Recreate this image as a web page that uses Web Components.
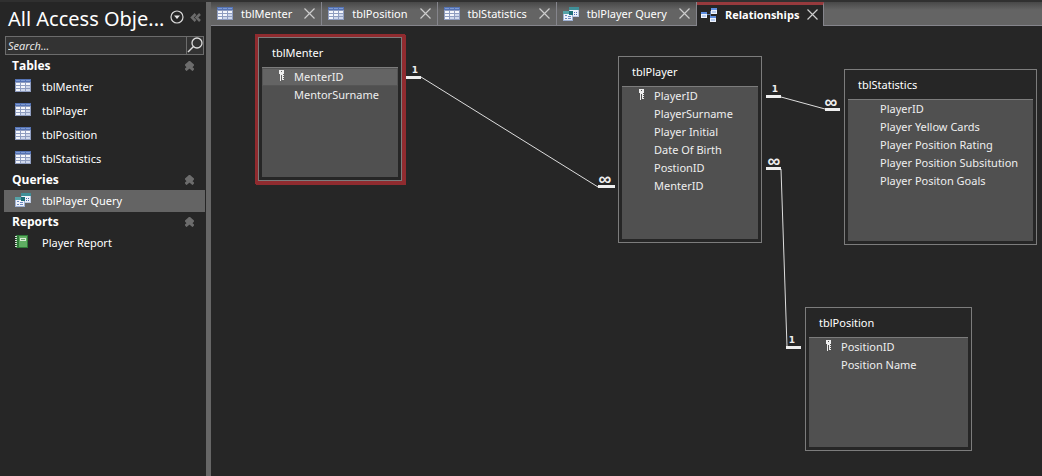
<!DOCTYPE html>
<html lang="en">
<head>
<meta charset="utf-8">
<title>Relationships</title>
<style>
html, body { height: 100%; }
body { margin: 0; background: #262626; color: #fff; font: 11px/18px "Noto Sans", "Open Sans", sans-serif; overflow: hidden; }
</style>
</head>
<body>
<access-window>
  <nav-pane slot="nav" heading="All Access Obje...">
    <nav-group label="Tables">
      <nav-item icon="table">tblMenter</nav-item>
      <nav-item icon="table">tblPlayer</nav-item>
      <nav-item icon="table">tblPosition</nav-item>
      <nav-item icon="table">tblStatistics</nav-item>
    </nav-group>
    <nav-group label="Queries">
      <nav-item icon="query" selected>tblPlayer Query</nav-item>
    </nav-group>
    <nav-group label="Reports">
      <nav-item icon="report">Player Report</nav-item>
    </nav-group>
  </nav-pane>
  <tab-bar slot="tabs">
    <doc-tab icon="table">tblMenter</doc-tab>
    <doc-tab icon="table">tblPosition</doc-tab>
    <doc-tab icon="table">tblStatistics</doc-tab>
    <doc-tab icon="query">tblPlayer Query</doc-tab>
    <doc-tab icon="relations" active>Relationships</doc-tab>
  </tab-bar>
  <relation-canvas>
    <table-node name="tblMenter" fields="*MenterID|MentorSurname" selected style="left:47px;top:11px;width:144px;height:144px"></table-node>
    <table-node name="tblPlayer" fields="*PlayerID|PlayerSurname|Player Initial|Date Of Birth|PostionID|MenterID" style="left:407px;top:30px;width:144px;height:187px"></table-node>
    <table-node name="tblStatistics" fields="PlayerID|Player Yellow Cards|Player Position Rating|Player Position Subsitution|Player Positon Goals" style="left:633px;top:43px;width:193px;height:176px"></table-node>
    <table-node name="tblPosition" fields="*PositionID|Position Name" style="left:594px;top:281px;width:167px;height:144px"></table-node>
  </relation-canvas>
</access-window>
<script>
const grid = `<rect width="16" height="13" fill="#8f9dc0"/><rect width="16" height="3" fill="#5573b4"/><path d="M1 1h4M6 1h4M11 1h4" stroke="#7f9bd2"/><path d="M1 4h4v2H1zM6 4h4v2H6zM11 4h4v2h-4zM1 7h4v2H1zM6 7h4v2H6zM11 7h4v2h-4zM1 10h4v2H1zM6 10h4v2H6zM11 10h4v2h-4z" fill="#f4f6fb"/><path d="M11 7h4v2h-4zM6 10h4v2H6zM11 10h4v2h-4z" fill="#cfd8ec"/>`;
const ICONS = {
  table: `<g transform="translate(0 1)">${grid}</g>`,
  query: `<rect x="6" y="1" width="10" height="10" fill="#b9c8e0"/><rect x="6" y="1" width="10" height="3" fill="#3f8f98"/><path d="M7 4h8v6H7z" fill="#eef2fa"/><path d="M11 6h1v1h-1zM13 6h1v1h-1zM11 8h1v1h-1zM13 8h1v1h-1z" fill="#4d6cb0"/><rect x="0" y="5" width="10" height="10" fill="#9fb2d6"/><path d="M0 5h10v3H0z" fill="#56a3a8"/><path d="M6 5h4v4H6z" fill="#1d6f78"/><path d="M1 8h5v1h3v5H1z" fill="#eef2fa"/><path d="M2 9h2v1H2zM5 10h3v1H5zM2 12h2v1H2zM5 12h3v1H5z" fill="#6d88c0"/>`,
  report: `<rect x="1" y="1" width="12" height="13" fill="#2f7a38"/><rect x="4" y="2" width="8" height="11" fill="#5fae62"/><path d="M5 4h6v3H5z" fill="#d9ecd6"/><path d="M6 5h4v1H6z" fill="#6fa570"/><path d="M0 2h3M0 4h3M0 6h3M0 8h3M0 10h3M0 12h3" stroke="#d9e4d9" stroke-dasharray="2 1"/>`,
  relations: `<path d="M5 7.500h4M9 4v8M9 4h2M9 12h1" fill="none" stroke="#5a78a8"/><rect x="0" y="5" width="6" height="6" fill="#eef3fc"/><rect x="0" y="5" width="6" height="2" fill="#5c8de0"/><rect x="10" y="1" width="6" height="6" fill="#eef3fc"/><rect x="10" y="1" width="6" height="2" fill="#5c8de0"/><rect x="9" y="9" width="6" height="6" fill="#eef3fc"/><rect x="9" y="9" width="6" height="2" fill="#5c8de0"/><path d="M11 4h4v2h-4zM10 12h4v2h-4zM1 8h4v2H1z" fill="#b9cdf0"/>`
};
const icon = n => `<svg class="icon" width="16" height="16" viewBox="0 0 16 16" shape-rendering="crispEdges" aria-hidden="true">${ICONS[n]}</svg>`;
const RESET = `button{font:inherit;color:inherit;background:none;border:0;padding:0;margin:0;text-align:left;display:block}svg{display:block;flex:none}`;

function define(name, render) {
  customElements.define(name, class extends HTMLElement {
    connectedCallback() {
      if (!this.shadowRoot) this.attachShadow({ mode: "open" }).innerHTML = render(this);
    }
  });
}

define("access-window", () => `<style>
  :host{display:grid;grid-template-columns:206px 5px minmax(0,1fr);min-height:100vh;background:#262626;box-sizing:border-box;border-top:2px solid #303030}
  .split{background:#666}
  main{display:flex;flex-direction:column;min-width:0}
  </style><slot name="nav"></slot><div class="split"></div><main><slot name="tabs"></slot><slot></slot></main>`);

define("nav-pane", el => `<style>${RESET}
  :host{display:block;padding:0 1px 0 4px}
  header{display:flex;align-items:center;height:34px}
  h1{margin:0;padding-left:4px;flex:1;font:20px/34px "Noto Sans","Open Sans",sans-serif;white-space:nowrap}
  .menu{margin-right:6px}
  .menu,.fold{align-self:flex-start;margin-top:8px}
  .fold{margin-right:4px}
  form{display:flex;height:17px;margin:0 1px 1px;border:1px solid #6c6c6c;background:#333}
  input{flex:1;min-width:0;border:0;outline:0;padding:0 2px;background:none;color:#fff;font:italic 11px/17px "Open Sans","Noto Sans",sans-serif}
  input::placeholder{color:#eee;opacity:1}
  form button{border-left:1px solid #6c6c6c;width:17px}
  </style>
  <header><h1>${el.getAttribute("heading")}</h1>
  <button class="menu" aria-label="Choose category"><svg width="14" height="14" viewBox="0 0 14 14"><circle cx="7" cy="7" r="6" fill="none" stroke="#d8d8d8" stroke-width="1.200"/><path d="M4 5.500h6L7 9z" fill="#e8e8e8"/></svg></button>
  <button class="fold" aria-label="Collapse pane"><svg width="11" height="14" viewBox="0 0 11 14"><path d="M5.500 4L2 7.500L5.500 11M10 4L6.500 7.500L10 11" fill="none" stroke="#6c6c6c" stroke-width="2.500"/></svg></button></header>
  <form><input type="text" aria-label="Search" placeholder="Search..."><button type="button" aria-label="Search"><svg width="16" height="17" viewBox="0 0 16 17"><circle cx="10" cy="6" r="5" fill="none" stroke="#ddd" stroke-width="1.300"/><path d="M6.500 9.500L1 15" stroke="#ddd" stroke-width="1.500"/></svg></button></form>
  <slot></slot>`);

define("nav-group", el => `<style>${RESET}
  :host{display:block}
  h2{margin:0;display:flex;align-items:center;justify-content:space-between;height:20px;padding:0 11px 0 8px;font:bold 12px/20px "Open Sans","Noto Sans",sans-serif}
  .items{display:grid;row-gap:2px}
  </style><h2>${el.getAttribute("label")}<button aria-label="Collapse ${el.getAttribute("label")}"><svg width="9" height="10" viewBox="0 0 9 10"><path d="M.5 5L4.500 1.500L8.500 5M.5 9L4.500 5.500L8.500 9" fill="none" stroke="#6c6c6c" stroke-width="3"/></svg></button></h2>
  <div class="items"><slot></slot></div>`);

define("nav-item", el => `<style>${RESET}
  :host{display:block}
  :host([selected]){background:#646464}
  button{display:flex;align-items:center;gap:11px;width:100%;height:22px;padding-left:11px}
  .icon{margin-bottom:2px}
  </style><button>${icon(el.getAttribute("icon"))}<span><slot></slot></span></button>`);

define("tab-bar", () => `<style>
  :host{display:flex;height:24px;background:linear-gradient(#484848,#646464 8px)}
  .rest{flex:1;border-bottom:1px solid #85858c}
  </style><slot></slot><div class="rest"></div>`);

define("doc-tab", el => `<style>${RESET}
  :host{display:flex;align-items:center;box-sizing:border-box;padding:0 6px 0 6px;border-right:1px solid #85858c;border-bottom:1px solid #85858c;white-space:nowrap}
  :host([active]){background:#262626;border-top:3px solid #963a3d;border-bottom:0;padding:0 5px 2px 4px;font-family:"Open Sans","Noto Sans",sans-serif;font-weight:bold}
  .tab{display:flex;align-items:center;gap:8px;margin-right:12px}
  :host([active]) .tab{margin-right:8px}
  </style><button class="tab">${icon(el.getAttribute("icon"))}<span><slot></slot></span></button><button aria-label="Close"><svg width="11" height="11" viewBox="0 0 11 11"><path d="M.5.5l10 10M10.500.5l-10 10" stroke="#ccc" stroke-width="1.200"/></svg></button>`);

define("relation-canvas", () => `<style>
  :host{display:block;flex:1;position:relative;overflow:hidden}
  svg{position:absolute;inset:0;width:100%;height:100%}
  text{fill:#eee;font:bold 9px "DejaVu Sans",sans-serif;text-anchor:middle}
  .inf{font:bold 18px "Liberation Sans",sans-serif}
  </style><svg>
  <path d="M210 51L387 161M570 71L614 83M570 143L576 321" fill="none" stroke="#ddd"/>
  <path d="M195 51.500h15M387 160.500h17M555 70.500h15M614 83.500h15M555 142.500h15M575 321.500h15" stroke="#eee" stroke-width="3"/>
  <text x="204" y="47">1</text><text class="inf" x="394" y="159">∞</text>
  <text x="564" y="66">1</text><text class="inf" x="620" y="82">∞</text>
  <text class="inf" x="563" y="141">∞</text><text x="581" y="317">1</text>
  </svg><slot></slot>`);

const key = `<svg width="7" height="11" viewBox="0 0 7 11" shape-rendering="crispEdges" aria-hidden="true"><path fill="#eee" fill-rule="evenodd" d="M1 0h5v4H5v1h1v1H5v1h1v1H5v1h1v1H4V5H3v6H2V4H1zM3 1v1h1V1z"/></svg>`;
define("table-node", el => `<style>
  :host{display:flex;flex-direction:column;position:absolute;box-sizing:border-box;border:1px solid #7c7c7c;padding:0 3px 3px;background:#262626}
  :host([selected]){box-shadow:0 0 0 3px #902b2f,1px 1px 0 3px #902b2f}
  h3{margin:0;height:29px;padding-left:10px;font:inherit;line-height:29px}
  ul{flex:1;margin:0;padding:0;list-style:none;background:#505050;border-top:1px solid #7c7c7c}
  li{display:grid;grid-template-columns:16px 16px 1fr;height:18px;color:#eee;white-space:nowrap}
  li svg{grid-column:2;margin-top:2px}
  li span{grid-column:3}
  :host([selected]) li:first-child{background:#646464;box-shadow:inset 0 0 0 1px #555}
  </style><h3>${el.getAttribute("name")}</h3><ul>${el.getAttribute("fields").split("|").map(f => `<li>${f[0] === "*" ? key : ""}<span>${f.replace("*", "")}</span></li>`).join("")}</ul>`);
</script>
</body>
</html>
